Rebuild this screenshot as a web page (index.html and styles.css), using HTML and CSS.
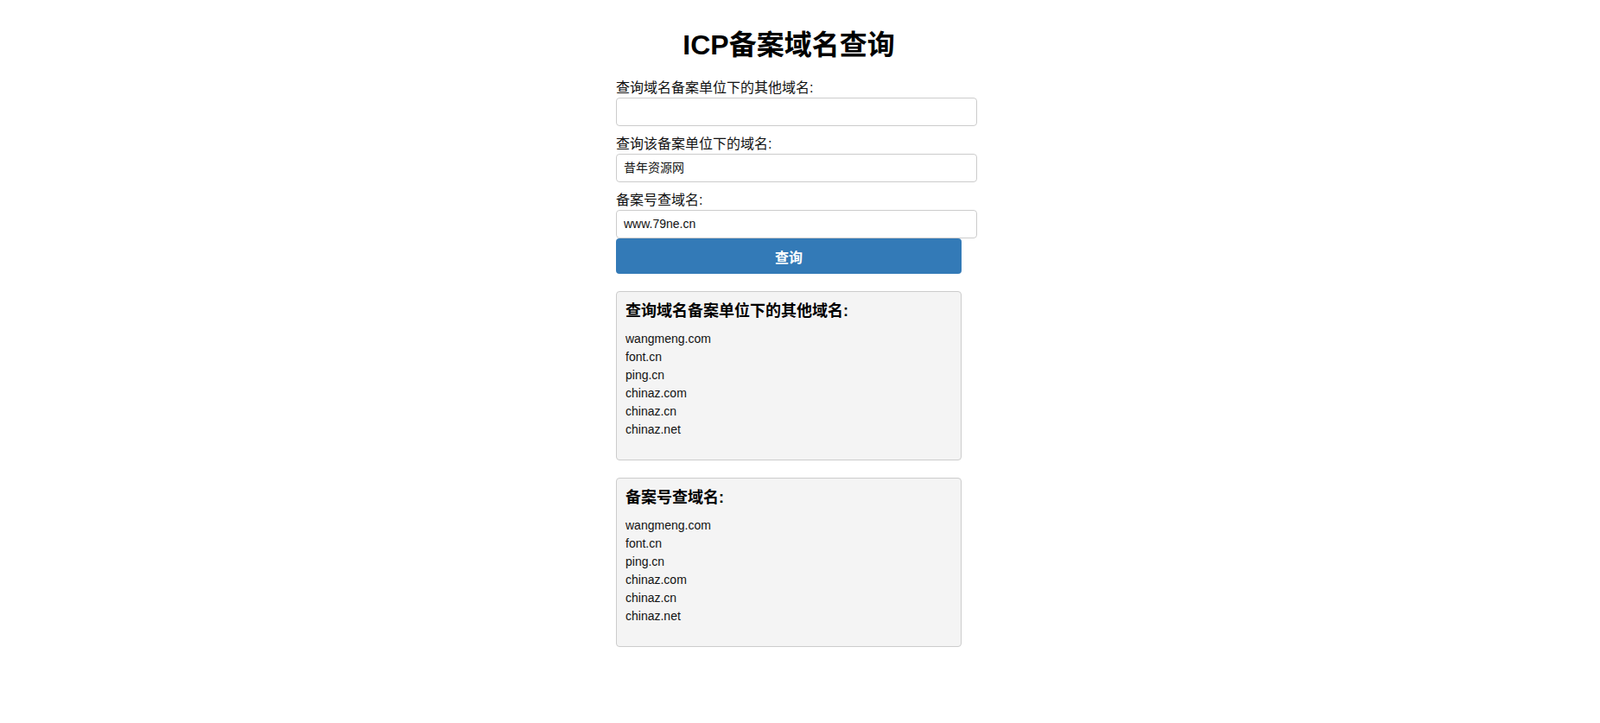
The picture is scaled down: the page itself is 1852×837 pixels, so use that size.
FILE: index.html
```html
<!DOCTYPE html>
<html lang="zh-CN">
<head>
    <meta charset="UTF-8">
    <meta name="viewport" content="width=device-width, initial-scale=1.0">
    <title>ICP备案域名查询</title>
    <link rel="stylesheet" href="styles.css">
</head>
<body>
    <div class="container">
        <h1>ICP备案域名查询</h1>
        <form class="query-form">
            <label for="domain">查询域名备案单位下的其他域名:</label>
            <input type="text" id="domain" name="domain" value="">
            <label for="company">查询该备案单位下的域名:</label>
            <input type="text" id="company" name="company" value="昔年资源网">
            <label for="icp">备案号查域名:</label>
            <input type="text" id="icp" name="icp" value="www.79ne.cn">
            <button type="button" class="btn">查询</button>
        </form>

        <div class="result">
            <h3>查询域名备案单位下的其他域名:</h3>
            <ul>
                <li>wangmeng.com</li>
                <li>font.cn</li>
                <li>ping.cn</li>
                <li>chinaz.com</li>
                <li>chinaz.cn</li>
                <li>chinaz.net</li>
            </ul>
        </div>

        <div class="result">
            <h3>备案号查域名:</h3>
            <ul>
                <li>wangmeng.com</li>
                <li>font.cn</li>
                <li>ping.cn</li>
                <li>chinaz.com</li>
                <li>chinaz.cn</li>
                <li>chinaz.net</li>
            </ul>
        </div>
    </div>
</body>
</html>
```

FILE: styles.css
```css
body {
    font-family: "Liberation Sans", Arial, "Noto Sans CJK SC", sans-serif;
    margin: 0;
    padding: 0 26px 0 0;
    color: #111;
    background: #fff;
}
.container {
    width: 400px;
    margin: 0 auto;
}
h1 {
    text-align: center;
    font-size: 32px;
    line-height: 40px;
    margin: 32px 0 19px;
    color: #000;
}
.query-form label {
    display: block;
    font-size: 16px;
    line-height: 22px;
}
.query-form label + input {
    margin-bottom: 10px;
}
.query-form input {
    display: block;
    width: 100%;
    height: 15px;
    padding: 8px;
    margin: 0;
    border: 1px solid #ccc;
    border-radius: 4px;
    font-family: inherit;
    font-size: 14px;
    line-height: 15px;
    color: #111;
    background: #fff;
}
.query-form input:last-of-type {
    margin-bottom: 0;
}
.btn {
    display: block;
    width: 400px;
    height: 41px;
    margin: 0;
    padding: 0;
    border: none;
    border-radius: 4px;
    background-color: #337ab7;
    color: #fff;
    font-family: inherit;
    font-size: 16px;
    font-weight: bold;
}
.result {
    box-sizing: border-box;
    width: 400px;
    height: 196px;
    margin-top: 20px;
    padding: 10px;
    border: 1px solid #ccc;
    border-radius: 4px;
    background-color: #f4f4f4;
}
.result h3 {
    font-size: 18px;
    line-height: 24px;
    margin: 0 0 10px;
    color: #000;
}
.result ul {
    list-style: none;
    margin: 0;
    padding: 0;
}
.result li {
    font-size: 14px;
    line-height: 21px;
    color: #111;
}
```
